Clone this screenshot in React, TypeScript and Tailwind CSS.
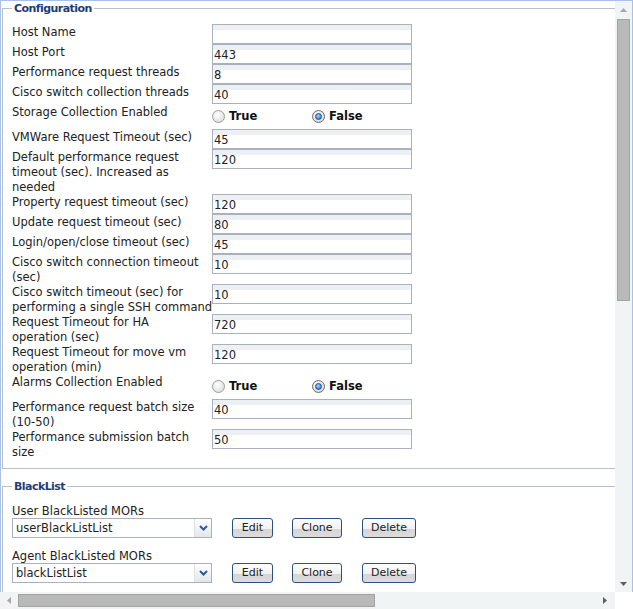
import React from 'react';

type Row = {
  label: string[];
  value?: string;
  radio?: boolean;
};

const configRows: Row[] = [
  { label: ['Host Name'], value: '' },
  { label: ['Host Port'], value: '443' },
  { label: ['Performance request threads'], value: '8' },
  { label: ['Cisco switch collection threads'], value: '40' },
  { label: ['Storage Collection Enabled'], radio: false },
  { label: ['VMWare Request Timeout (sec)'], value: '45' },
  { label: ['Default performance request', 'timeout (sec). Increased as', 'needed'], value: '120' },
  { label: ['Property request timeout (sec)'], value: '120' },
  { label: ['Update request timeout (sec)'], value: '80' },
  { label: ['Login/open/close timeout (sec)'], value: '45' },
  { label: ['Cisco switch connection timeout', '(sec)'], value: '10' },
  { label: ['Cisco switch timeout (sec) for', 'performing a single SSH command'], value: '10' },
  { label: ['Request Timeout for HA', 'operation (sec)'], value: '720' },
  { label: ['Request Timeout for move vm', 'operation (min)'], value: '120' },
  { label: ['Alarms Collection Enabled'], radio: false },
  { label: ['Performance request batch size', '(10-50)'], value: '40' },
  { label: ['Performance submission batch', 'size'], value: '50' },
];

const Radio = ({ checked, text }: { checked: boolean; text: string }) => (
  <div className="flex w-[100px] items-center gap-[4px]">
    <span
      className={`flex h-[13px] w-[13px] items-center justify-center rounded-full border ${
        checked
          ? 'border-[#6b6b6b] bg-[radial-gradient(circle_at_40%_35%,#ffffff,#cfcfcf)]'
          : 'border-[#9c9c9c] bg-[radial-gradient(circle_at_40%_35%,#ffffff,#d4d4d4)]'
      }`}
    >
      {checked && (
        <span className="h-[7px] w-[7px] rounded-full border border-[#1b4f8f] bg-[radial-gradient(circle_at_40%_35%,#9fd6ff,#2466c2)]" />
      )}
    </span>
    <span className="font-bold text-[#111]">{text}</span>
  </div>
);

const TextBox = ({ value }: { value: string }) => (
  <input
    readOnly
    value={value}
    className="h-[20px] w-[200px] border border-[#abb0c0] bg-[linear-gradient(#edf0f2_0,#edf0f2_5px,#ffffff_5px)] pl-[1px] pt-[2px] text-[11.5px] text-[#222] outline-none"
  />
);

const Select = ({ value }: { value: string }) => (
  <div className="flex h-[20px] w-[200px] border border-[#abb0c0] bg-white">
    <div className="flex-1 pl-[3px] leading-[18px] text-[#222]">{value}</div>
    <div className="flex w-[17px] items-center justify-center border-l border-[#dde1e6] bg-[linear-gradient(#ffffff,#e2e6ea)]">
      <svg width="9" height="6" viewBox="0 0 9 6">
        <path d="M1 1 L4.5 4.5 L8 1" fill="none" stroke="#2b5a9c" strokeWidth="2" />
      </svg>
    </div>
  </div>
);

const Button = ({ text, cls }: { text: string; cls: string }) => (
  <button
    className={`${cls} h-[20px] rounded-[3px] border border-[#2a4f80] bg-[linear-gradient(#fdfdfd_0,#f1f1f1_55%,#d5d5d5_55%,#dcdcdc_100%)] text-[11px] leading-[18px] text-[#222]`}
  >
    {text}
  </button>
);

const Legend = ({ text }: { text: string }) => (
  <legend className="ml-[9px] px-[2px] text-[11px] font-bold leading-[15px] tracking-[-0.55px] text-[#1e3c78]">
    {text}
  </legend>
);

const BlackListRow = ({ label, value, top }: { label: string; value: string; top: string }) => (
  <>
    <div className={`${top} leading-[15px]`}>{label}</div>
    <div className="flex h-[20px] items-center">
      <Select value={value} />
      <Button text="Edit" cls="ml-[20px] w-[41px]" />
      <Button text="Clone" cls="ml-[19px] w-[50px]" />
      <Button text="Delete" cls="ml-[20px] w-[54px]" />
    </div>
  </>
);

export default function App() {
  return (
    <div className="flex h-[609px] w-[633px] flex-col overflow-hidden bg-white font-['DejaVu_Sans',sans-serif] text-[11.5px] text-[#222]">
      <div className="flex h-[592px] border-l border-r border-t border-[#a6c2ea]">
        <div className="flex-1 overflow-hidden">
          <div className="w-[1000px]">
            <fieldset className="ml-[1px] border border-[#b8bfcc]">
              <Legend text="Configuration" />
              <div className="pb-[9px] pl-[9px] pt-[8px]">
                {configRows.map((r, i) => (
                  <div key={i} className="flex">
                    <div className="-mb-[1px] w-[200px] whitespace-nowrap pt-[1px] leading-[15px]">
                      {r.label.map((l, j) => (
                        <div key={j}>{l}</div>
                      ))}
                    </div>
                    {r.radio !== undefined ? (
                      <div className="flex h-[25px] items-center">
                        <Radio checked={r.radio} text="True" />
                        <Radio checked={!r.radio} text="False" />
                      </div>
                    ) : (
                      <TextBox value={r.value ?? ''} />
                    )}
                  </div>
                ))}
              </div>
            </fieldset>

            <fieldset className="ml-[1px] mt-[10px] h-[200px] border border-[#b8bfcc]">
              <Legend text="BlackList" />
              <div className="pl-[9px] pt-[9px]">
                <BlackListRow label="User BlackListed MORs" value="userBlackListList" top="pt-[1px] -mb-[1px]" />
                <BlackListRow label="Agent BlackListed MORs" value="blackListList" top="mt-[11px] -mb-[1px]" />
              </div>
            </fieldset>
          </div>
        </div>

        {/* vertical scrollbar */}
        <div className="flex w-[17px] flex-col bg-[#f0f4f4]">
          <div className="flex h-[17px] items-center justify-center">
            <svg width="7" height="4" viewBox="0 0 7 4">
              <path d="M0 4 L3.5 0 L7 4 Z" fill="#a8a8a8" />
            </svg>
          </div>
          <div className="mx-[2px] mt-[1px] h-[282px] border border-[#a3a3a3] bg-[#b9b9b9]" />
          <div className="flex-1" />
          <div className="flex h-[17px] items-center justify-center">
            <svg width="7" height="4" viewBox="0 0 7 4">
              <path d="M0 0 L3.5 4 L7 0 Z" fill="#606060" />
            </svg>
          </div>
        </div>
      </div>

      {/* horizontal scrollbar */}
      <div className="flex h-[17px]">
        <div className="flex w-[615px] items-center bg-[#f0f4f4]">
          <div className="flex h-[17px] w-[17px] items-center justify-center">
            <svg width="4" height="7" viewBox="0 0 4 7">
              <path d="M4 0 L0 3.5 L4 7 Z" fill="#a8a8a8" />
            </svg>
          </div>
          <div className="ml-[1px] h-[13px] w-[357px] border border-[#a3a3a3] bg-[#b9b9b9]" />
          <div className="flex-1" />
          <div className="flex h-[17px] w-[20px] items-center justify-center">
            <svg width="4" height="7" viewBox="0 0 4 7">
              <path d="M0 0 L4 3.5 L0 7 Z" fill="#606060" />
            </svg>
          </div>
        </div>
        <div className="flex-1 bg-white" />
      </div>
    </div>
  );
}
